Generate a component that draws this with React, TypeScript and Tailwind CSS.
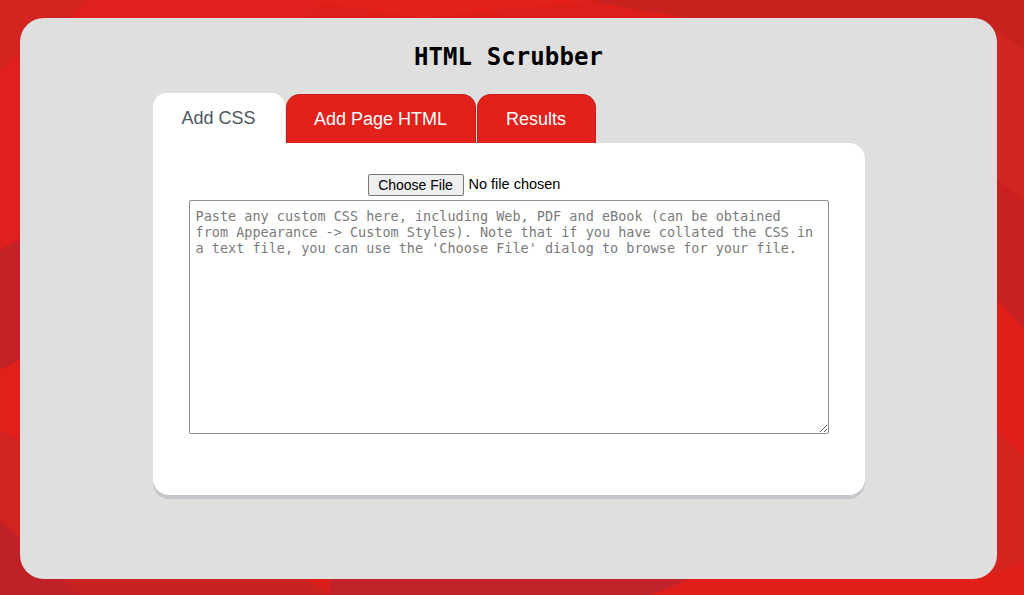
import React, { useState } from 'react';

const tabs = ['Add CSS', 'Add Page HTML', 'Results'];

const Backdrop = () => (
  <svg className="absolute inset-0 w-full h-full" viewBox="0 0 1024 595" preserveAspectRatio="none">
    <rect width="1024" height="595" fill="#dd1f1c" />
    <polygon points="0,0 100,0 0,70" fill="#d42420" />
    <polygon points="90,0 330,0 0,250 0,70" fill="#df201c" />
    <polygon points="580,0 1024,0 1024,60 700,20" fill="#c8221f" />
    <polygon points="300,0 600,0 420,18" fill="#e3201b" />
    <polygon points="0,250 20,240 20,360 0,370" fill="#c22226" />
    <polygon points="0,370 20,360 20,440 0,430" fill="#e12019" />
    <polygon points="0,430 20,440 20,560 0,520" fill="#d02420" />
    <polygon points="0,520 80,595 0,595" fill="#bf2127" />
    <polygon points="60,575 300,575 330,595 80,595" fill="#c92221" />
    <polygon points="330,575 700,575 650,595 330,595" fill="#c0232a" />
    <polygon points="700,575 1024,560 1024,595 650,595" fill="#e11f1a" />
    <polygon points="997,30 1024,50 1024,200 997,180" fill="#d02520" />
    <polygon points="997,180 1024,200 1024,330 997,300" fill="#c8211f" />
    <polygon points="997,300 1024,330 1024,460 997,430" fill="#e01f1b" />
    <polygon points="997,430 1024,460 1024,560 990,575" fill="#d42420" />
  </svg>
);

export default function App() {
  const [active, setActive] = useState(0);

  return (
    <div className="relative h-[595px] w-[1024px] overflow-hidden">
      <Backdrop />
      <div className="relative pl-[20px] pr-[27px] pt-[18px] pb-[16px] h-full">
        <div className="h-full rounded-[24px] bg-[#dfdfdf] flex flex-col items-center">
          <h1 className="mt-[27px] text-[24px] leading-[24px] font-bold text-black tracking-[0.1px] font-['DejaVu_Sans_Mono',monospace]">
            HTML Scrubber
          </h1>

          <div className="mt-[24px] w-[712px] font-['Liberation_Sans',Arial,sans-serif]">
            <div className="flex items-end h-[50px]">
              {tabs.map((t, i) => (
                <button
                  key={t}
                  onClick={() => setActive(i)}
                  className={
                    i === active
                      ? 'h-[50px] w-[132px] rounded-t-[14px] bg-white text-[#4d5761] text-[18px]'
                      : 'h-[49px] mr-px rounded-t-[14px] bg-[#e2211b] border border-b-0 border-[#c91c17] text-white text-[18px] ' +
                        (i === 1 ? 'w-[190px] ml-px' : 'w-[119px]')
                  }
                >
                  {t}
                </button>
              ))}
            </div>

            <div className="bg-white rounded-b-[16px] rounded-tr-[16px] shadow-[0_4px_0_#c3c7cc] pt-[31px] pb-[61px] px-[36px]">
              <div className="w-[282px] mx-auto flex items-center h-[22px]">
                <button className="h-[22px] w-[96px] bg-[#efefef] border border-[#767676] rounded-[2px] text-[14px] text-black leading-none">
                  Choose File
                </button>
                <span className="ml-[5px] text-[14.5px] text-black">No file chosen</span>
              </div>
              <textarea
                className="mt-[4px] block w-[640px] h-[234px] border border-[#8f8f8f] rounded-[2px] pl-[6px] pr-[10px] pt-[7px] text-[13.5px] leading-[16px] font-['DejaVu_Sans_Mono',monospace] placeholder:text-[#7a7a7a] outline-none"
                placeholder="Paste any custom CSS here, including Web, PDF and eBook (can be obtained from Appearance -> Custom Styles). Note that if you have collated the CSS in a text file, you can use the 'Choose File' dialog to browse for your file."
              />
            </div>
          </div>
        </div>
      </div>
    </div>
  );
}
